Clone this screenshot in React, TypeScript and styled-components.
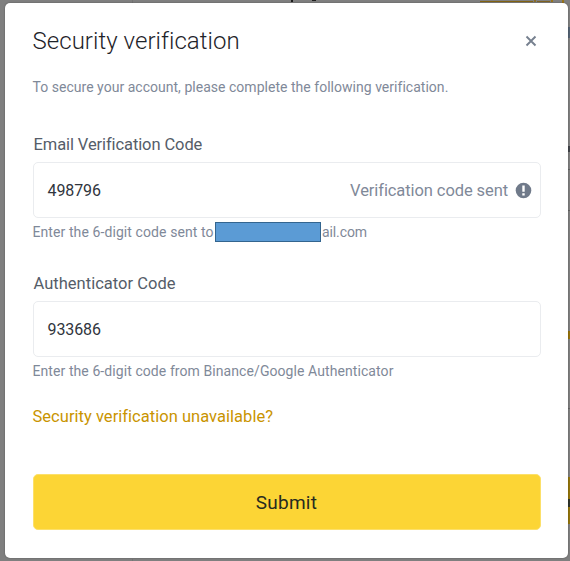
import React from 'react';
import styled, { createGlobalStyle } from 'styled-components';

const GlobalStyle = createGlobalStyle`
  * { box-sizing: border-box; }
  body { margin: 0; background: #7f7f7f; font-family: Roboto, "Noto Sans", sans-serif; }
`;

const Page = styled.main`
  position: relative;
  width: 570px;
  height: 561px;
  padding: 3px 2px 3px 5px;
  overflow: hidden;
  background: #7f7f7f;
`;

const Fragment = styled.i<{ $x: number; $y: number; $w: number; $h: number; $color: string }>`
  position: absolute;
  left: ${p => p.$x}px;
  top: ${p => p.$y}px;
  width: ${p => p.$w}px;
  height: ${p => p.$h}px;
  background: ${p => p.$color};
`;

const Dialog = styled.section`
  position: relative;
  height: 555px;
  padding: 22px 27.5px 28px 27.5px;
  display: flex;
  flex-direction: column;
  background: #fff;
  border-radius: 5px;
  box-shadow: 0 0 2px rgba(0, 0, 0, 0.35);
`;

const Header = styled.header`
  height: 32px;
  display: flex;
  align-items: center;
  justify-content: space-between;
`;

const Text = styled.span<{ $size: number; $color: string; $spacing?: number; $weight?: number }>`
  font-size: ${p => p.$size}px;
  color: ${p => p.$color};
  letter-spacing: ${p => p.$spacing ?? 0}px;
  font-weight: ${p => p.$weight ?? 400};
  white-space: nowrap;
`;

const Title = styled.h1`
  margin: 0;
  font-size: 24px;
  line-height: 32px;
  font-weight: 300;
  letter-spacing: 0.04px;
  color: #1e2329;
`;

const CloseButton = styled.button`
  width: 20px;
  height: 20px;
  padding: 0;
  border: 0;
  background: none;
  display: grid;
  place-items: center;
`;

const Intro = styled.p`
  margin: 20px 0 0;
  height: 20px;
  line-height: 20px;
`;

const Field = styled.div<{ $gap: number }>`
  margin-top: ${p => p.$gap}px;
  display: flex;
  flex-direction: column;
`;

const Label = styled.label`
  height: 24px;
  padding-left: 1px;
  line-height: 26px;
`;

const InputBox = styled.div`
  height: 56px;
  margin-top: 6px;
  padding: 0 7.5px 0 14px;
  border: 1px solid #eaecef;
  border-radius: 5px;
  display: flex;
  align-items: center;
  justify-content: space-between;
`;

const Status = styled.div`
  display: flex;
  align-items: center;
  gap: 7px;
`;

const Hint = styled.div`
  height: 20px;
  margin-top: 4px;
  display: flex;
  align-items: center;
  line-height: 20px;
`;

const Redaction = styled.span`
  width: 106px;
  height: 20px;
  margin-right: 1px;
  flex: none;
  background: #5b9bd5;
  border: 1px solid #33658f;
`;

const HintLead = styled.span`
  width: 182.5px;
  flex: none;
`;

const HelpLink = styled.a`
  height: 24px;
  margin-top: 24px;
  line-height: 24px;
`;

const Submit = styled.button`
  height: 56px;
  margin-top: 45px;
  padding: 1px 0 0;
  border: 1px solid #fce06a;
  border-radius: 5px;
  background: #fcd535;
  font-family: inherit;
`;

const hintColor = '#7f8999';

export default function App() {
  return (
    <Page>
      <GlobalStyle />
      <Fragment $x={132} $y={0} $w={1} $h={3} $color="#747474" />
      <Fragment $x={132} $y={559} $w={1} $h={2} $color="#747474" />
      <Fragment $x={291} $y={0} $w={2} $h={2} $color="#1c1c1c" />
      <Fragment $x={312} $y={0} $w={4} $h={1} $color="#202020" />
      <Fragment $x={480} $y={1} $w={53} $h={1} $color="#846413" />
      <Fragment $x={534} $y={0} $w={2} $h={2} $color="#8d6e27" />
      <Fragment $x={537} $y={1} $w={13} $h={1} $color="#806321" />
      <Fragment $x={551} $y={0} $w={2} $h={2} $color="#98731a" />
      <Fragment $x={562} $y={0} $w={2} $h={3} $color="#98731a" />
      <Fragment $x={568} $y={27} $w={2} $h={11} $color="#536273" />
      <Fragment $x={568} $y={146} $w={2} $h={6} $color="#41444a" />
      <Fragment $x={568} $y={169} $w={2} $h={1} $color="#626262" />
      <Fragment $x={568} $y={210} $w={2} $h={1} $color="#626262" />
      <Fragment $x={568} $y={331} $w={2} $h={8} $color="#96730c" />
      <Fragment $x={568} $y={408} $w={2} $h={1} $color="#666666" />
      <Fragment $x={568} $y={477} $w={2} $h={47} $color="#94750b" />
      <Fragment $x={568} $y={499} $w={2} $h={8} $color="#30352c" />
      <Dialog role="dialog" aria-labelledby="dialog-title">
        <Header>
          <Title id="dialog-title">Security verification</Title>
          <CloseButton aria-label="Close">
            <svg width="12" height="12" viewBox="0 0 12 12" fill="none" stroke="#76808f" strokeWidth="1.9">
              <path d="M1.5 1.5l9 9M10.5 1.5l-9 9" />
            </svg>
          </CloseButton>
        </Header>
        <Intro>
          <Text $size={14} $color={hintColor} $spacing={0.025}>To secure your account, please complete the following verification.</Text>
        </Intro>
        <Field $gap={35}>
          <Label><Text $size={16.5} $color="#555d69" $spacing={-0.1}>Email Verification Code</Text></Label>
          <InputBox>
            <Text $size={16} $color="#30353d" $spacing={-0.1}>498796</Text>
            <Status>
              <Text $size={16.5} $color={hintColor} $spacing={-0.09}>Verification code sent</Text>
              <svg width="17" height="17" viewBox="0 0 17 17">
                <circle cx="8.5" cy="8.5" r="7.8" fill="#707a8a" />
                <path d="M7.3 3.5h2.4v6.3H7.3zM7.3 11.3h2.4v2.2H7.3z" fill="#fff" />
              </svg>
            </Status>
          </InputBox>
          <Hint>
            <HintLead><Text $size={14} $color={hintColor} $spacing={0.09}>Enter the 6-digit code sent to</Text></HintLead>
            <Redaction />
            <Text $size={14} $color={hintColor} $spacing={-0.1}>ail.com</Text>
          </Hint>
        </Field>
        <Field $gap={29}>
          <Label><Text $size={16.5} $color="#555d69" $spacing={0.02}>Authenticator Code</Text></Label>
          <InputBox><Text $size={16} $color="#30353d" $spacing={-0.1}>933686</Text></InputBox>
          <Hint><Text $size={14} $color={hintColor} $spacing={0.08}>Enter the 6-digit code from Binance/Google Authenticator</Text></Hint>
        </Field>
        <HelpLink><Text $size={16.5} $color="#c99400" $spacing={0.03}>Security verification unavailable?</Text></HelpLink>
        <Submit><Text $size={19} $color="#272b20" $spacing={0.25}>Submit</Text></Submit>
      </Dialog>
    </Page>
  );
}
